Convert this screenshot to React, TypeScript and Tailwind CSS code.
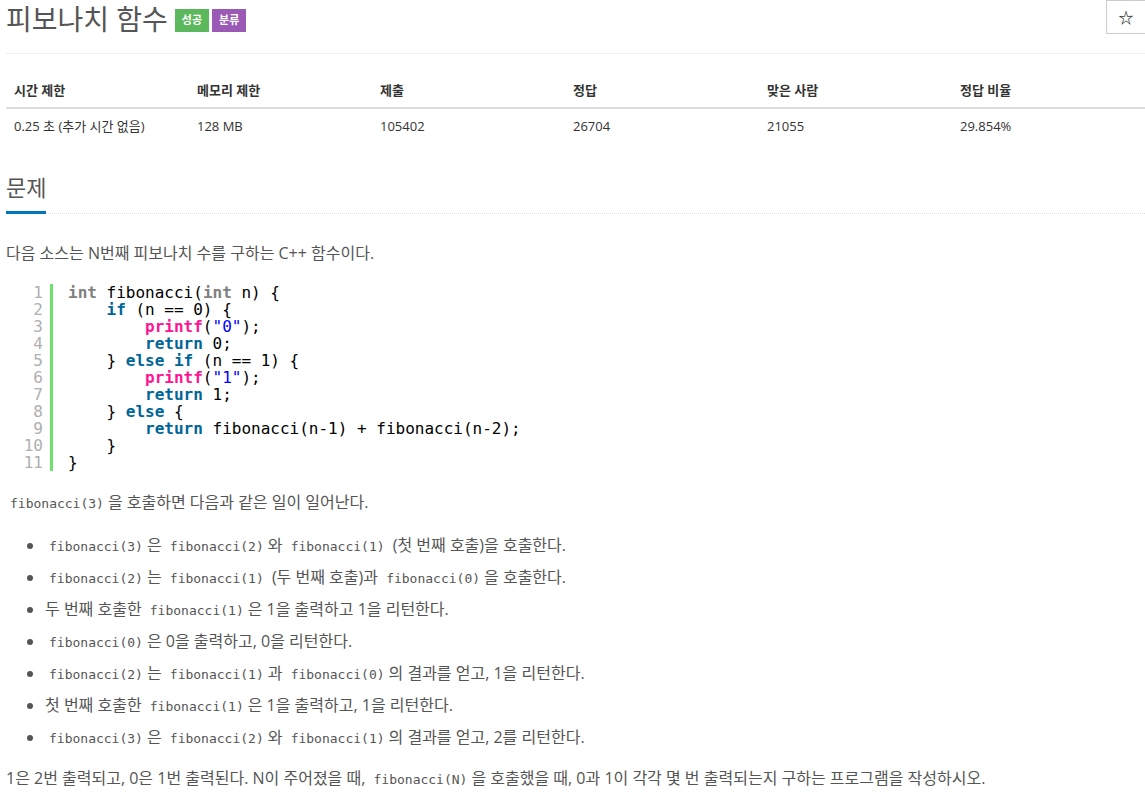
import React from "react";

const sans = "font-['Open_Sans','Noto_Sans_CJK_KR',sans-serif]";
const mono = "font-['DejaVu_Sans_Mono','Noto_Sans_CJK_KR',monospace]";

const Code = ({ children }: { children: React.ReactNode }) => (
  <code className={`${mono} text-[13px] leading-none text-[#555] px-1`}>{children}</code>
);

const stats = [
  ["시간 제한", "0.25 초 (추가 시간 없음)"],
  ["메모리 제한", "128 MB"],
  ["제출", "105402"],
  ["정답", "26704"],
  ["맞은 사람", "21055"],
  ["정답 비율", "29.854%"],
];

const Kw = ({ children }: { children: React.ReactNode }) => (
  <span className="text-[#006699] font-bold">{children}</span>
);
const Ty = ({ children }: { children: React.ReactNode }) => (
  <span className="text-[#808080] font-bold">{children}</span>
);
const Fn = ({ children }: { children: React.ReactNode }) => (
  <span className="text-[#ff1493] font-bold">{children}</span>
);
const Str = ({ children }: { children: React.ReactNode }) => (
  <span className="text-[#0000ff]">{children}</span>
);

const codeLines: React.ReactNode[] = [
  <>
    <Ty>int</Ty> fibonacci(<Ty>int</Ty> n) {"{"}
  </>,
  <>
    {"    "}
    <Kw>if</Kw> (n == 0) {"{"}
  </>,
  <>
    {"        "}
    <Fn>printf</Fn>(<Str>"0"</Str>);
  </>,
  <>
    {"        "}
    <Kw>return</Kw> 0;
  </>,
  <>
    {"    "}
    {"} "}
    <Kw>else</Kw> <Kw>if</Kw> (n == 1) {"{"}
  </>,
  <>
    {"        "}
    <Fn>printf</Fn>(<Str>"1"</Str>);
  </>,
  <>
    {"        "}
    <Kw>return</Kw> 1;
  </>,
  <>
    {"    "}
    {"} "}
    <Kw>else</Kw> {"{"}
  </>,
  <>
    {"        "}
    <Kw>return</Kw> fibonacci(n-1) + fibonacci(n-2);
  </>,
  <>{"    }"}</>,
  <>{"}"}</>,
];

const items: React.ReactNode[] = [
  <>
    <Code>fibonacci(3)</Code>은 <Code>fibonacci(2)</Code>와 <Code>fibonacci(1)</Code> (첫 번째 호출)을 호출한다.
  </>,
  <>
    <Code>fibonacci(2)</Code>는 <Code>fibonacci(1)</Code> (두 번째 호출)과 <Code>fibonacci(0)</Code>을 호출한다.
  </>,
  <>
    두 번째 호출한 <Code>fibonacci(1)</Code>은 1을 출력하고 1을 리턴한다.
  </>,
  <>
    <Code>fibonacci(0)</Code>은 0을 출력하고, 0을 리턴한다.
  </>,
  <>
    <Code>fibonacci(2)</Code>는 <Code>fibonacci(1)</Code>과 <Code>fibonacci(0)</Code>의 결과를 얻고, 1을 리턴한다.
  </>,
  <>
    첫 번째 호출한 <Code>fibonacci(1)</Code>은 1을 출력하고, 1을 리턴한다.
  </>,
  <>
    <Code>fibonacci(3)</Code>은 <Code>fibonacci(2)</Code>와 <Code>fibonacci(1)</Code>의 결과를 얻고, 2를 리턴한다.
  </>,
];

export default function App() {
  return (
    <div className={`${sans} bg-white min-h-screen pl-[6px] text-[#333]`}>
      {/* title */}
      <div className="flex items-start justify-between h-[54px] border-b border-[#eee]">
        <div className="flex items-center gap-[7px] pt-[2px]">
          <h1 className="text-[28px] leading-[34px] text-[#555]">피보나치 함수</h1>
          <div className="flex gap-[3px] mt-[2px]">
            <span className="bg-[#5cb85c] text-white text-[11px] font-bold h-[23px] px-[7px] flex items-center">성공</span>
            <span className="bg-[#9b59b6] text-white text-[11px] font-bold h-[23px] px-[7px] flex items-center">분류</span>
          </div>
        </div>
        <button className="w-[39px] h-[34px] border border-[#ccc] border-r-0 flex items-center justify-center text-[15px] font-bold text-[#333]">
          ☆
        </button>
      </div>

      {/* stats table */}
      <div className="mt-[21px] grid grid-cols-[183px_183px_193px_194px_193px_1fr] text-[13px]">
        {stats.map(([h]) => (
          <div key={h} className="px-2 h-[34px] flex items-center font-bold border-b-2 border-[#ddd]">
            {h}
          </div>
        ))}
        {stats.map(([h, v]) => (
          <div key={h + "v"} className="px-2 h-[36px] flex items-center">
            {v}
          </div>
        ))}
      </div>

      {/* section heading */}
      <div className="mt-[25px] flex items-end border-b border-dotted border-[#ddd]">
        <h2 className="text-[22px] leading-[34px] text-[#555] border-b-[3px] border-[#0076c0] pb-[7px] -mb-px">
          문제
        </h2>
      </div>

      <div className="text-[16px] text-[#555]">
        <p className="mt-[27px] leading-[24px]">다음 소스는 N번째 피보나치 수를 구하는 C++ 함수이다.</p>

        <div className={`${mono} mt-[19px] flex text-[16px] leading-[17px]`}>
          <div className="w-[47px] pr-[7px] text-right text-[#afafaf] border-r-[3px] border-[#6ce26c]">
            {codeLines.map((_, i) => (
              <div key={i}>{i + 1}</div>
            ))}
          </div>
          <pre className={`${mono} pl-[15px] text-black`}>
            {codeLines.map((l, i) => (
              <div key={i}>{l}</div>
            ))}
          </pre>
        </div>

        <p className="mt-[19px] leading-[24px]">
          <Code>fibonacci(3)</Code>을 호출하면 다음과 같은 일이 일어난다.
        </p>

        <ul className="mt-[19px] pl-[39px] list-disc">
          {items.map((it, i) => (
            <li key={i} className="leading-[24px] mb-[8px] marker:text-[#555]">
              {it}
            </li>
          ))}
        </ul>

        <p className="mt-[17px] leading-[24px]">
          1은 2번 출력되고, 0은 1번 출력된다. N이 주어졌을 때, <Code>fibonacci(N)</Code>을 호출했을 때, 0과 1이 각각 몇 번 출력되는지 구하는 프로그램을 작성하시오.
        </p>
      </div>
    </div>
  );
}
